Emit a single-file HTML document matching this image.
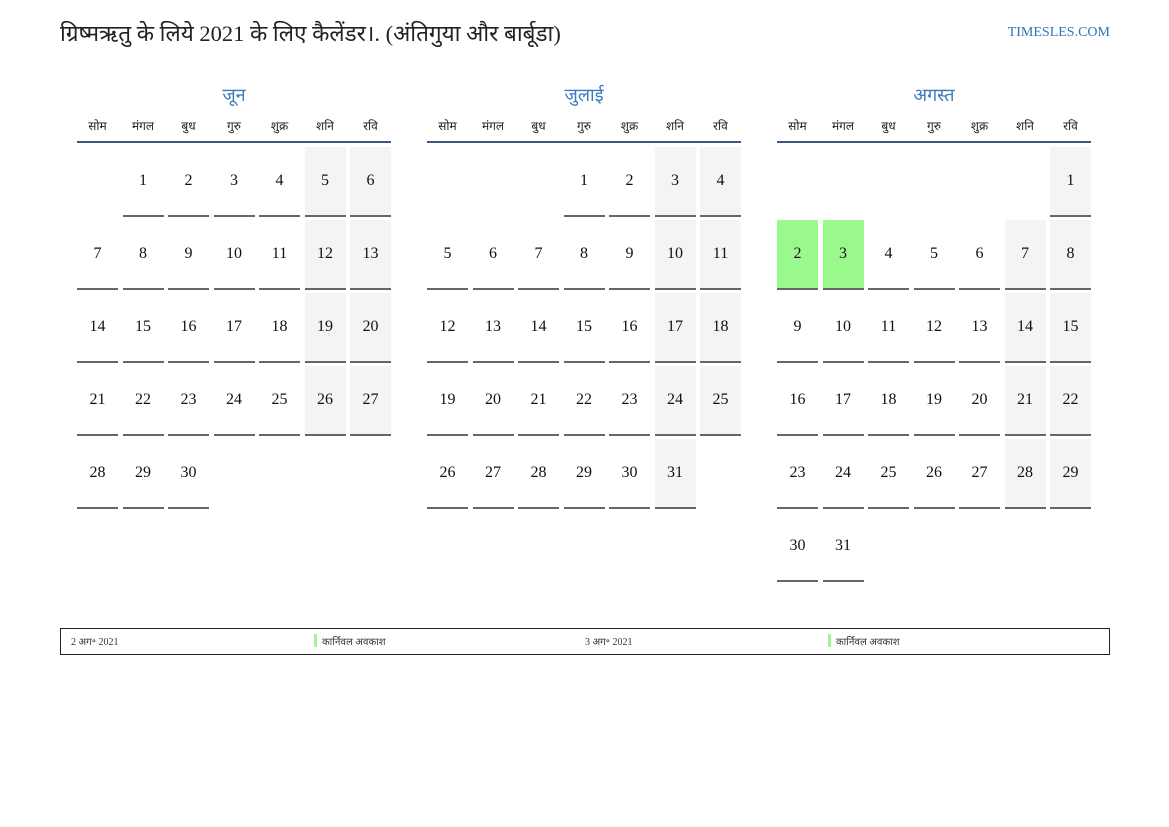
<!DOCTYPE html>
<html><head><meta charset="utf-8"><style>
*{margin:0;padding:0;box-sizing:border-box}
body{width:1169px;height:827px;background:#fff;position:relative;font-family:"Liberation Serif","Noto Serif CJK SC",serif;color:#222;overflow:hidden}
.title{position:absolute;left:60px;top:17px;font-size:22.5px;font-family:"Liberation Serif","Noto Sans CJK SC",serif;color:#222;white-space:nowrap}
.site{position:absolute;right:59px;top:25px;font-size:14px;color:#2f74b8}
.m{position:absolute;top:82px;width:314px}
.mt{text-align:center;font-size:18px;color:#3a7abf;height:26px;line-height:26px}
.hd{display:grid;grid-template-columns:repeat(7,41px);column-gap:4.5px;height:35px;border-bottom:2px solid #3d5a80;font-size:12px;line-height:36px;text-align:center}
.gr{display:grid;grid-template-columns:repeat(7,41px);column-gap:4.5px;row-gap:3px;margin-top:4px}
.gr div{height:70px;line-height:68px;text-align:center;font-size:16px;color:#111}
.d,.w,.g{border-bottom:2px solid #666}
.w{background:#f4f4f4}
.g{background:#9af98c}
.foot{position:absolute;left:60px;top:628px;width:1050px;height:27px;border:1.5px solid #222;font-size:10px;color:#333}
.foot span{position:absolute;top:5px}
.bar{position:absolute;top:5px;width:3px;height:13px;background:#9af98c}
</style></head><body>
<div class="title">ग्रिष्मऋतु के लिये 2021 के लिए कैलेंडर।. (अंतिगुया और बार्बूडा)</div>
<div class="site">TIMESLES.COM</div>

<div class="m" style="left:77px">
<div class="mt">जून</div>
<div class="hd"><span>सोम</span><span>मंगल</span><span>बुध</span><span>गुरु</span><span>शुक्र</span><span>शनि</span><span>रवि</span></div>
<div class="gr">
<div></div><div class="d">1</div><div class="d">2</div><div class="d">3</div><div class="d">4</div><div class="w">5</div><div class="w">6</div>
<div class="d">7</div><div class="d">8</div><div class="d">9</div><div class="d">10</div><div class="d">11</div><div class="w">12</div><div class="w">13</div>
<div class="d">14</div><div class="d">15</div><div class="d">16</div><div class="d">17</div><div class="d">18</div><div class="w">19</div><div class="w">20</div>
<div class="d">21</div><div class="d">22</div><div class="d">23</div><div class="d">24</div><div class="d">25</div><div class="w">26</div><div class="w">27</div>
<div class="d">28</div><div class="d">29</div><div class="d">30</div>
</div></div>

<div class="m" style="left:427px">
<div class="mt">जुलाई</div>
<div class="hd"><span>सोम</span><span>मंगल</span><span>बुध</span><span>गुरु</span><span>शुक्र</span><span>शनि</span><span>रवि</span></div>
<div class="gr">
<div></div><div></div><div></div><div class="d">1</div><div class="d">2</div><div class="w">3</div><div class="w">4</div>
<div class="d">5</div><div class="d">6</div><div class="d">7</div><div class="d">8</div><div class="d">9</div><div class="w">10</div><div class="w">11</div>
<div class="d">12</div><div class="d">13</div><div class="d">14</div><div class="d">15</div><div class="d">16</div><div class="w">17</div><div class="w">18</div>
<div class="d">19</div><div class="d">20</div><div class="d">21</div><div class="d">22</div><div class="d">23</div><div class="w">24</div><div class="w">25</div>
<div class="d">26</div><div class="d">27</div><div class="d">28</div><div class="d">29</div><div class="d">30</div><div class="w">31</div>
</div></div>

<div class="m" style="left:777px">
<div class="mt">अगस्त</div>
<div class="hd"><span>सोम</span><span>मंगल</span><span>बुध</span><span>गुरु</span><span>शुक्र</span><span>शनि</span><span>रवि</span></div>
<div class="gr">
<div></div><div></div><div></div><div></div><div></div><div></div><div class="w">1</div>
<div class="g">2</div><div class="g">3</div><div class="d">4</div><div class="d">5</div><div class="d">6</div><div class="w">7</div><div class="w">8</div>
<div class="d">9</div><div class="d">10</div><div class="d">11</div><div class="d">12</div><div class="d">13</div><div class="w">14</div><div class="w">15</div>
<div class="d">16</div><div class="d">17</div><div class="d">18</div><div class="d">19</div><div class="d">20</div><div class="w">21</div><div class="w">22</div>
<div class="d">23</div><div class="d">24</div><div class="d">25</div><div class="d">26</div><div class="d">27</div><div class="w">28</div><div class="w">29</div>
<div class="d">30</div><div class="d">31</div>
</div></div>

<div class="foot">
<span style="left:10px">2 अग॰ 2021</span>
<div class="bar" style="left:253px"></div><span style="left:261px">कार्निवल अवकाश</span>
<span style="left:524px">3 अग॰ 2021</span>
<div class="bar" style="left:767px"></div><span style="left:775px">कार्निवल अवकाश</span>
</div>
</body></html>
